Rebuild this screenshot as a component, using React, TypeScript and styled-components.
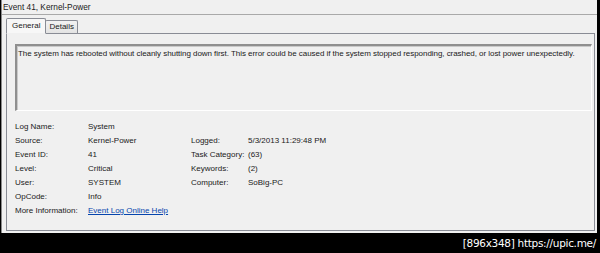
import React from "react";
import styled, { createGlobalStyle } from "styled-components";

const Global = createGlobalStyle`
  html, body { margin: 0; padding: 0; background: #000; }
  #root { width: 600px; height: 253px; }
`;

const Frame = styled.div`
  width: 600px;
  height: 253px;
  background: #000;
  display: flex;
  flex-direction: column;
  font-family: "Liberation Sans", Arial, sans-serif;
  color: #1a1a1a;
`;

const Window = styled.div`
  width: 596px;
  height: 233px;
  margin-left: 1px;
  background: #f0f0f0;
  border-left: 1px solid #8a8a8a;
  box-sizing: border-box;
  display: flex;
  flex-direction: column;
`;

const TitleBar = styled.div`
  height: 15px;
  box-sizing: border-box;
  padding: 2px 0 0 1px;
  font-size: 8.3px;
  line-height: 10px;
  border-bottom: 1px solid #a9a9a9;
`;

const TabStrip = styled.div`
  display: flex;
  align-items: flex-end;
  padding: 3px 0 0 4px;
  height: 18px;
  box-sizing: border-box;
  position: relative;
  z-index: 1;
`;

const Tab = styled.div<{ $active?: boolean }>`
  font-size: 8px;
  line-height: 10px;
  box-sizing: border-box;
  border: 1px solid #898c95;
  border-radius: 2px 2px 0 0;
  height: ${(p) => (p.$active ? "16px" : "13px")};
  padding: ${(p) => (p.$active ? "2px 5px 0 5px" : "1px 3px 0 3px")};
  margin-bottom: ${(p) => (p.$active ? "-1px" : "0")};
  border-bottom: ${(p) => (p.$active ? "1px solid #f0f0f0" : "none")};
  background: ${(p) =>
    p.$active ? "#f7f7f7" : "linear-gradient(#f2f2f2, #e3e3e3)"};
  & + & { margin-left: -1px; }
`;

const Panel = styled.div`
  flex: 1;
  margin: 0 2px 2px 4px;
  border: 1px solid #898c95;
  background: #f0f0f0;
  box-sizing: border-box;
  display: flex;
  flex-direction: column;
  padding: 10px 2px 0 8px;
`;

const Description = styled.div`
  height: 67px;
  box-sizing: border-box;
  border-style: solid;
  border-width: 2px 1px 1px 2px;
  border-color: #8f8f8f #ffffff #ffffff #8f8f8f;
  box-shadow: inset 1px 1px 0 #c9c9c9;
  padding: 3px 2px 0 1px;
  font-size: 8px;
  line-height: 10px;
  white-space: nowrap;
  letter-spacing: -0.05px;
`;

const Fields = styled.div`
  display: grid;
  grid-template-columns: 73px 103px 57px 1fr;
  grid-auto-rows: 14px;
  margin-top: 9px;
  font-size: 8px;
  line-height: 14px;
`;

const Cell = styled.div<{ $col: number; $span?: number }>`
  white-space: nowrap;
  grid-column: ${(p) => p.$col} / span ${(p) => p.$span ?? 1};
`;

const Link = styled.a`
  color: #0645ad;
  text-decoration: underline;
`;

const Footer = styled.div`
  flex: 1;
  display: flex;
  justify-content: flex-end;
  align-items: center;
  padding-right: 4px;
  color: #fff;
  font-family: "DejaVu Sans", sans-serif;
  font-size: 10.5px;
  letter-spacing: -0.3px;
`;

const rows: [string, string, string?, string?][] = [
  ["Log Name:", "System"],
  ["Source:", "Kernel-Power", "Logged:", "5/3/2013 11:29:48 PM"],
  ["Event ID:", "41", "Task Category:", "(63)"],
  ["Level:", "Critical", "Keywords:", "(2)"],
  ["User:", "SYSTEM", "Computer:", "SoBig-PC"],
  ["OpCode:", "Info"],
];

export default function App() {
  return (
    <Frame>
      <Global />
      <Window>
        <TitleBar>Event 41, Kernel-Power</TitleBar>
        <TabStrip>
          <Tab $active>General</Tab>
          <Tab>Details</Tab>
        </TabStrip>
        <Panel>
          <Description>
            The system has rebooted without cleanly shutting down first. This error could be caused if the system stopped responding, crashed, or lost power unexpectedly.
          </Description>
          <Fields>
            {rows.map(([a, b, c, d]) => (
              <React.Fragment key={a}>
                <Cell $col={1}>{a}</Cell>
                <Cell $col={2}>{b}</Cell>
                {c && <Cell $col={3}>{c}</Cell>}
                {d && <Cell $col={4}>{d}</Cell>}
              </React.Fragment>
            ))}
            <Cell $col={1}>More Information:</Cell>
            <Cell $col={2} $span={3}>
              <Link href="#">Event Log Online Help</Link>
            </Cell>
          </Fields>
        </Panel>
      </Window>
      <Footer>[896x348] https://upic.me/</Footer>
    </Frame>
  );
}
